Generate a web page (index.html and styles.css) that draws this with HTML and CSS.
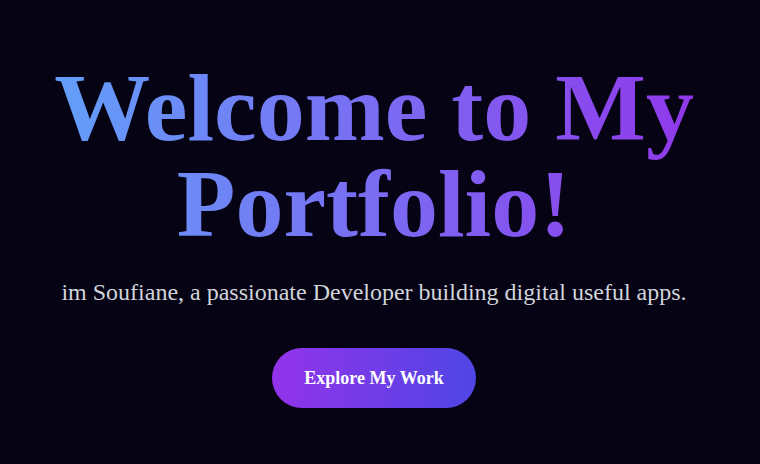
FILE: index.html
```html
<!DOCTYPE html>
<html lang="en">
<head>
<meta charset="utf-8">
<title>Portfolio</title>
<link rel="stylesheet" href="styles.css">
</head>
<body>
<main class="hero">
  <h1 class="hero-title">Welcome to My Portfolio!</h1>
  <p class="hero-subtitle">im Soufiane, a passionate Developer building digital useful apps.</p>
  <a class="hero-button" href="#work">Explore My Work</a>
</main>
</body>
</html>
```
FILE: styles.css
```css
html, body {
  margin: 0;
  padding: 0;
}
body {
  background: #050314;
  font-family: "Liberation Serif", "Times New Roman", serif;
  color: #fff;
}
.hero {
  min-height: 100vh;
  box-sizing: border-box;
  padding: 4px 30px 0 18px;
  display: flex;
  flex-direction: column;
  align-items: center;
  justify-content: center;
  text-align: center;
}
.hero-title {
  margin: 0 0 24px;
  font-size: 96px;
  line-height: 1;
  font-weight: 700;
  background: linear-gradient(to right, #60a5fa, #9333ea);
  -webkit-background-clip: text;
  background-clip: text;
  color: transparent;
  width: 100%;
}
.hero-subtitle {
  margin: 0 0 40px;
  font-size: 24px;
  line-height: 32px;
  color: #d1d5db;
}
.hero-button {
  display: inline-block;
  padding: 16px 32px;
  font-size: 18px;
  line-height: 28px;
  font-weight: 700;
  color: #fff;
  text-decoration: none;
  border-radius: 9999px;
  background: linear-gradient(to right, #9333ea, #4f46e5);
}
```
